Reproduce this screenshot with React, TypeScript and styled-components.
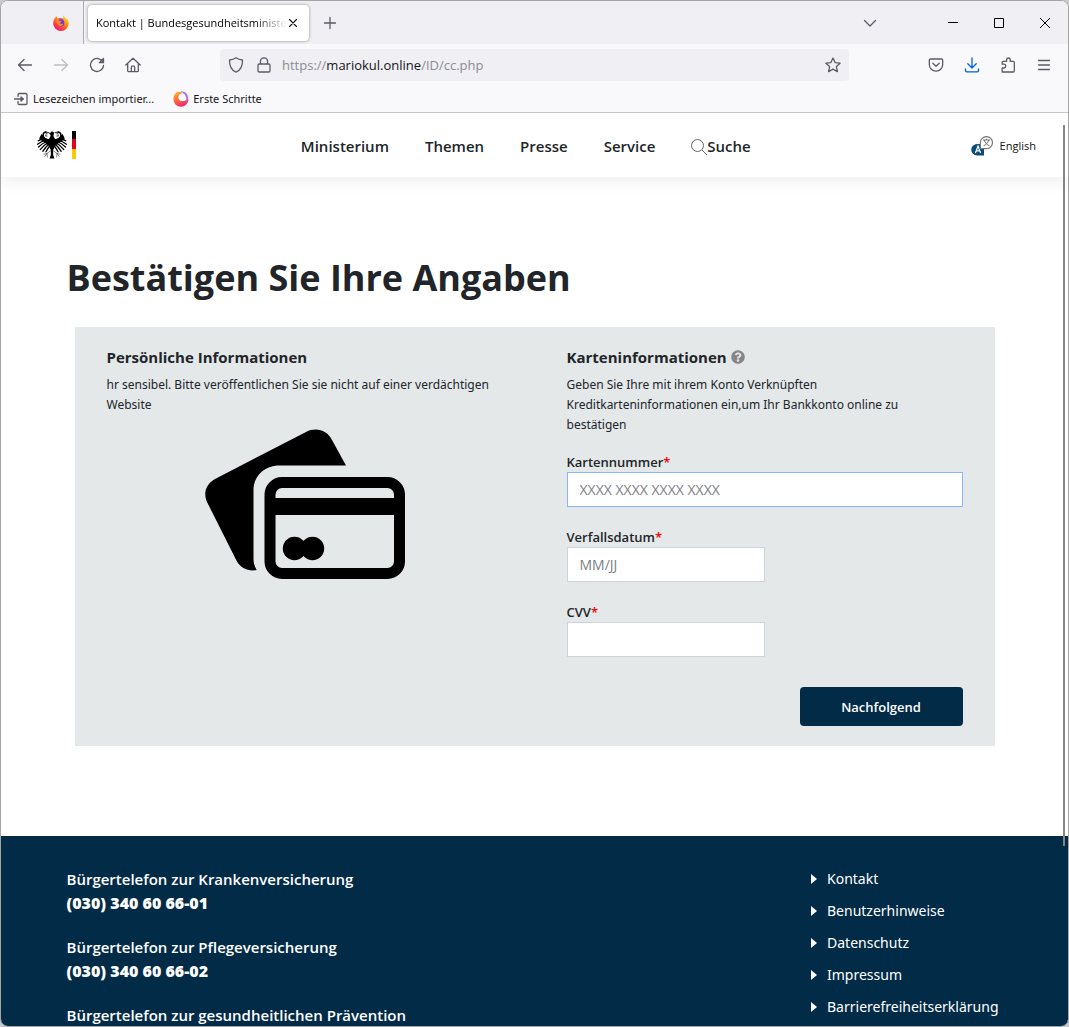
import React from "react";
import styled, { createGlobalStyle } from "styled-components";
import { FaQuestionCircle } from "react-icons/fa";

const navy = "#022b47";
const ink = "#212529";
const chromeInk = "#5b5b66";

const GlobalStyle = createGlobalStyle`
  *, *::before, *::after { box-sizing: border-box; }
  html, body { margin: 0; background: #c9c9c9; }
  body { font-family: "Open Sans", "Noto Sans", sans-serif; color: ${ink}; }
  button { font: inherit; color: inherit; background: none; border: 0; padding: 0; }
  a { color: inherit; text-decoration: none; }
  h1, h2, p, ul { margin: 0; padding: 0; }
  svg { display: block; flex: none; }
`;

const Window = styled.div`
  display: flex;
  flex-direction: column;
  height: 100vh;
  overflow: hidden;
  border: 1px solid #a5a5a5;
  border-radius: 8px;
  background: #fff;
`;

const TabStrip = styled.div`
  display: flex;
  align-items: center;
  height: 43px;
  flex: none;
  background: #f0eff4;
`;

const PinnedTab = styled.button`
  display: flex;
  align-items: center;
  justify-content: flex-end;
  width: 83px;
  height: 100%;
  padding-right: 14px;
  border-right: 1px solid #aeaeb3;
`;

const Tab = styled.div`
  display: flex;
  align-items: center;
  width: 221px;
  height: 36px;
  margin-left: 4px;
  padding: 0 10px 0 8px;
  border-radius: 4px;
  background: #fff;
  box-shadow: 0 0 3px rgba(0, 0, 0, 0.45);
`;

const TabTitle = styled.span`
  flex: 1;
  overflow: hidden;
  white-space: nowrap;
  font-size: 11px;
  line-height: 20px;
  color: #000;
  mask-image: linear-gradient(to left, transparent, #000 32px);
`;

const IconButton = styled.button<{ $w?: number; $color?: string }>`
  display: flex;
  align-items: center;
  justify-content: center;
  width: ${(p) => p.$w ?? 36}px;
  height: 36px;
  flex: none;
  color: ${(p) => p.$color ?? chromeInk};
`;

const Spacer = styled.div`
  flex: 1;
`;

const WindowControls = styled.div`
  display: flex;
  margin-left: 29px;
`;

const Toolbar = styled.div`
  display: flex;
  align-items: center;
  height: 41px;
  flex: none;
  padding: 0 6px;
  background: #f9f9fb;
`;

const AddressBar = styled.div`
  display: flex;
  align-items: center;
  flex: 1;
  height: 32px;
  margin: 0 69px;
  padding: 0 2px;
  border-radius: 4px;
  background: #f0f0f4;
`;

const Url = styled.span`
  flex: 1;
  padding-left: 4px;
  font-size: 13px;
  line-height: 20px;
  color: #8b8b93;

  b { font-weight: 400; color: #15141a; }
`;

const Bookmarks = styled.div`
  display: flex;
  align-items: center;
  gap: 19px;
  height: 28px;
  flex: none;
  padding: 0 12px;
  border-bottom: 1px solid #c6c6c8;
  background: #f9f9fb;
`;

const Bookmark = styled.button`
  display: flex;
  align-items: center;
  gap: 4px;
  font-family: "Noto Sans", "Open Sans", sans-serif;
  font-size: 11px;
  line-height: 20px;
  color: #15141a;
`;

const Viewport = styled.div`
  position: relative;
  display: flex;
  flex-direction: column;
  flex: 1;
  min-height: 0;
  overflow: hidden;
`;

const ScrollThumb = styled.div`
  position: absolute;
  top: 12px;
  right: 3px;
  width: 2px;
  height: 79%;
  background: #858585;
`;

const SiteHeader = styled.header`
  display: flex;
  align-items: center;
  justify-content: space-between;
  height: 64px;
  flex: none;
  padding: 0 32px 0 36px;
  box-shadow: 0 4px 16px rgba(0, 0, 0, 0.07);
`;

const Nav = styled.nav`
  display: flex;
  gap: 36px;
  padding-top: 2px;
  font-size: 15px;
  font-weight: 600;
  line-height: 24px;
`;

const NavLink = styled.a`
  display: flex;
  align-items: center;

  svg { margin-top: 2px; }
`;

const Language = styled.a`
  display: flex;
  align-items: center;
  gap: 7px;
  padding-top: 1px;
  font-size: 11px;
  line-height: 20px;
  color: #111;
`;

const Main = styled.main`
  width: 100%;
  max-width: 936px;
  flex: none;
  margin: 0 auto;
  padding: 77px 0 90px;
`;

const Title = styled.h1`
  font-size: 36px;
  font-weight: 700;
  line-height: 48px;
`;

const Panel = styled.form`
  display: grid;
  grid-template-columns: 1fr 1fr;
  margin: 25px 8px 0;
  background: #e4e8e9;
`;

const Column = styled.section`
  display: flex;
  flex-direction: column;
  padding: 20px 32px;
`;

const SectionTitle = styled.h2`
  display: flex;
  align-items: center;
  gap: 4px;
  font-size: 15px;
  font-weight: 700;
  line-height: 20px;

  svg { color: #868686; }
`;

const Hint = styled.p`
  margin: 8px 0 14px;
  font-family: "Noto Sans", "Open Sans", sans-serif;
  font-size: 12px;
  line-height: 20px;
`;

const CardArt = styled.svg`
  align-self: center;
`;

const Field = styled.div<{ $half?: boolean }>`
  display: flex;
  flex-direction: column;
  width: ${(p) => (p.$half ? "50%" : "100%")};
  margin: 3px 0 17px;
`;

const Label = styled.label`
  font-size: 13px;
  font-weight: 600;
  line-height: 20px;

  span { color: #f00; }
`;

const Input = styled.input<{ $active?: boolean }>`
  width: 100%;
  height: 35px;
  padding: 0 12px;
  border: 1px solid ${(p) => (p.$active ? "#86b7fe" : "#ced4da")};
  border-radius: 0;
  outline: 0;
  background: #fff;
  font: 14px/20px "Open Sans", "Noto Sans", sans-serif;
  color: ${ink};

  &::placeholder { color: #7b8085; opacity: 1; }
`;

const Submit = styled.button`
  align-self: flex-end;
  width: 163px;
  height: 39px;
  margin-top: 13px;
  border-radius: 4px;
  background: ${navy};
  color: #fff;
  font-size: 13px;
  font-weight: 600;
`;

const Footer = styled.footer`
  flex: 1 0 auto;
  background: ${navy};
  color: #fff;
`;

const FooterInner = styled.div`
  display: flex;
  justify-content: space-between;
  max-width: 936px;
  margin: 0 auto;
  padding-top: 31px;
`;

const Phones = styled.ul`
  display: flex;
  flex-direction: column;
  gap: 20px;
  list-style: none;
  font-size: 15px;
  font-weight: 600;
  line-height: 24px;

  a { display: block; font-size: 16px; font-weight: 800; }
`;

const Links = styled.ul`
  display: flex;
  flex-direction: column;
  gap: 8px;
  padding-right: 4px;
  list-style: none;
  font-family: "Noto Sans", "Open Sans", sans-serif;
  font-size: 14px;
  line-height: 24px;

  a { display: flex; align-items: center; gap: 10px; }
`;

const stroke = {
  fill: "none",
  stroke: "currentColor",
  strokeWidth: 1.3,
  strokeLinecap: "round" as const,
  strokeLinejoin: "round" as const,
};

function Glyph({ d, size = 16, sw = 1.3 }: { d: string; size?: number; sw?: number }) {
  return (
    <svg width={size} height={size} viewBox="0 0 16 16" {...stroke} strokeWidth={sw} aria-hidden="true">
      <path d={d} />
    </svg>
  );
}

function Firefox() {
  return (
    <svg width="16" height="16" viewBox="0 0 16 16" aria-hidden="true">
      <defs>
        <linearGradient id="fx" x1="0.9" y1="0" x2="0.2" y2="1">
          <stop offset="0" stopColor="#fff44f" />
          <stop offset="0.4" stopColor="#ff980e" />
          <stop offset="0.75" stopColor="#ff3647" />
          <stop offset="1" stopColor="#e31587" />
        </linearGradient>
      </defs>
      <path d="M10.6 0.2c-.8 1.2-.6 2 .1 2.9L5 3.2C4 2.6 3.800 1.900 3.700 1.300 2.500 2 .2 4.500.2 8.300a7.800 7.700 0 0 0 15.600 0c0-2.300-.8-4-2-5.100l.1 1.200C13 2.800 11 2.300 10.600.2z" fill="url(#fx)" />
      <circle cx="7.800" cy="8" r="3.600" fill="#7139d8" />
      <path d="M3.400 5.200c1.600-.5 2.700.1 3.300.8h2c-.3.900-1.500 1.100-1.700 2 .4 1.200 2.300 1.100 3.300.3-.2 2-1.700 2.800-3.200 2.600-2-.3-3.800-2.300-3.700-5.700z" fill="#ff8a1c" />
      <path d="M5.600 3.700c2-.9 4.800.1 5.600 2.200-1.400-.9-2.600-.9-3.400-.2z" fill="#a93fd1" />
    </svg>
  );
}

function Swirl() {
  return (
    <svg width="16" height="16" viewBox="0 0 16 16" aria-hidden="true">
      <defs>
        <linearGradient id="sw" x1="0.2" y1="0" x2="0.6" y2="1">
          <stop offset="0" stopColor="#ffb02e" />
          <stop offset="0.5" stopColor="#ff6a3a" />
          <stop offset="1" stopColor="#f0227d" />
        </linearGradient>
      </defs>
      <path d="M5 .8C1.800 2 .4 5 .4 8.200a7.500 7.500 0 0 0 15 .2c0-1.200-.2-2-.6-3-.5 2.700-2 4.700-4.800 4.700C7.300 10.100 5.600 8.600 5.600 6.400c0-2.200 1.800-3.900 4.200-4.200C8.500.8 6.500.4 5 .8z" fill="url(#sw)" />
      <circle cx="9.300" cy="6.300" r="3.700" fill="#fff" opacity="0.900" />
      <path d="M7.500.4c4-.6 7.400 2.400 7.500 6 .1 2-1 3.800-2.600 4.600.7-1 1-2.500.8-4C12.800 4 10.500 2 7.500.4z" fill="#a876f5" />
    </svg>
  );
}

function FederalLogo() {
  const feathers = [
    "M7 7.500Q4 8.500 1.200 9.800",
    "M9 9Q4.500 10.500.5 13.200",
    "M11 10Q5.500 12 1.500 16",
    "M12 11Q7 14 3.200 18.600",
    "M12.500 12.500Q9 15.500 5.800 20.300",
    "M13 14.500Q11 17 9 20.800",
  ];
  const wing = (
    <g fill="none" stroke="#000" strokeLinecap="round">
      <path d="M13 9C10 8.200 7 7 6.500 4.800L4.600 3C3.200 4.800 2.300 6.800 2.300 8.500L7 11l5 4z" fill="#000" stroke="none" />
      {feathers.map((d) => (
        <path key={d} d={d} strokeWidth="1.300" />
      ))}
      <path d="M12.500 9C9.500 8.500 6.500 7 6.200 4.800 5.900 3 7 1.500 9 1.100" strokeWidth="1.500" />
      <path d="M9 1.100l3 .6M8.600 3l1.600-.3M8.400 4.800l1.700.2" strokeWidth="0.800" />
      <path d="M14 19.500l-4 3M10 22.500l-3 .6M10 22.500l-2 2.800M10 22.500l.3 3.500" strokeWidth="0.900" stroke="#777" />
    </g>
  );
  return (
    <svg width="44" height="28" viewBox="0 0 44 28" role="img" aria-label="Bundesadler">
      {wing}
      <g transform="translate(30 0) scale(-1 1)">{wing}</g>
      <path d="M13.500 1.800C14 .4 15.900.1 16.800 1.200l.2 1.400-.6 2.200c.4 1.700 2.200 2.800 2.200 5.600 0 3-1 5.600-2.100 8.100h-3c-1.100-2.500-2.100-5.100-2.100-8.100 0-2.800 1.700-3.900 2.200-5.600L13.100 3.300l-1.600-.5z" fill="#000" />
      <path d="M14 17.500h2l.2 6.500 1.300 3.600h-5l1.300-3.600z" fill="#000" />
      <path d="M35 0h4v9h-4z" fill="#000" />
      <path d="M35 8h4v10h-4z" fill="#e2001a" />
      <path d="M35 18h4v10h-4z" fill="#fbca00" />
    </svg>
  );
}

function TranslateIcon() {
  return (
    <svg width="22" height="20" viewBox="0 0 22 20" aria-hidden="true">
      <path d="M6 8h7v11.500H6a5.750 5.750 0 0 1 0-11.500z" fill="#0b4a78" />
      <path d="M4.400 17l2.600-7 2.600 7M5.300 14.800h3.500" fill="none" stroke="#fff" strokeWidth="1.200" />
      <path d="M15.500.6a6 6 0 0 1 0 12H9.400v-6A6 6 0 0 1 15.500.6z" fill="#fff" stroke="#777" strokeWidth="1.200" />
      <path d="M12 4h7M15.500 2.700V4M13.300 4c.6 2.800 2.800 4.900 5.200 5.800M17.700 4c-.6 2.800-2.800 4.900-5.200 5.800" fill="none" stroke="#666" strokeWidth="0.900" />
    </svg>
  );
}

function Cards() {
  return (
    <CardArt width="200" height="150" viewBox="0 0 200 150" role="img" aria-label="Kreditkarten">
      <path d="M10 50L101 3c10-5 21-2 26 8l14 25.500H72C58 38 48 48 48.500 62v68c0 4 1 7 3.200 11-8 1.500-16-1.500-20-9L2 73c-4-9-1-18 8-23z" />
      <rect x="65" y="53.500" width="129.500" height="91" rx="12" fill="none" stroke="#000" strokeWidth="11" />
      <path d="M68 69h125v17H68z" />
      <path d="M70 69v-4c0-4 2-6 6-6h-8v10zM190 69v-4c0-4-2-6-6-6h8v10zM70 133c0 4 2 6 6 6h-8v-6zM190 133c0 4-2 6-6 6h8v-6z" />
      <circle cx="89.500" cy="119.500" r="11.700" />
      <circle cx="107.500" cy="119.500" r="11.700" />
    </CardArt>
  );
}

const phones = [
  ["Bürgertelefon zur Krankenversicherung", "(030) 340 60 66-01"],
  ["Bürgertelefon zur Pflegeversicherung", "(030) 340 60 66-02"],
  ["Bürgertelefon zur gesundheitlichen Prävention", ""],
];

const links = ["Kontakt", "Benutzerhinweise", "Datenschutz", "Impressum", "Barrierefreiheitserklärung"];

export default function App() {
  return (
    <>
      <GlobalStyle />
      <Window>
        <TabStrip>
          <PinnedTab aria-label="Firefox">
            <Firefox />
          </PinnedTab>
          <Tab>
            <TabTitle>Kontakt | Bundesgesundheitsministerium</TabTitle>
            <IconButton $w={12} $color="#15141a" aria-label="Tab schließen">
              <Glyph d="M1 1l14 14M15 1L1 15" size={8} sw={2.2} />
            </IconButton>
          </Tab>
          <IconButton $w={42} aria-label="Neuer Tab">
            <Glyph d="M8 2.500v11M2.500 8h11" />
          </IconButton>
          <Spacer />
          <IconButton $w={62} aria-label="Tabs auflisten">
            <Glyph d="M2.500 5.500L8 11l5.500-5.500" />
          </IconButton>
          <WindowControls>
            <IconButton $w={46} $color="#000" aria-label="Minimieren">
              <svg width="10" height="10" viewBox="0 0 10 10"><path d="M0 4h10v1H0z" /></svg>
            </IconButton>
            <IconButton $w={46} $color="#000" aria-label="Maximieren">
              <svg width="10" height="10" viewBox="0 0 10 10"><path d="M.5.5h9v9h-9z" fill="none" stroke="#000" /></svg>
            </IconButton>
            <IconButton $w={46} $color="#000" aria-label="Schließen">
              <svg width="10" height="10" viewBox="0 0 10 10"><path d="M0 0l10 10M10 0L0 10" stroke="#000" /></svg>
            </IconButton>
          </WindowControls>
        </TabStrip>

        <Toolbar>
          <IconButton aria-label="Zurück"><Glyph d="M14.500 8H1.500M7 2.500L1.500 8 7 13.500" /></IconButton>
          <IconButton $color="#bdbdc4" aria-label="Vor"><Glyph d="M1.500 8h13M9 2.500L14.500 8 9 13.500" /></IconButton>
          <IconButton aria-label="Neu laden"><Glyph d="M13.800 5A6.500 6.500 0 1 0 14.500 8.500M14.500 1.500v4.200h-4.200z" /></IconButton>
          <IconButton aria-label="Startseite"><Glyph d="M.8 8L8 1.200 15.200 8M2.700 6.500v7.200c0 .6.400 1 1 1h8.600c.6 0 1-.4 1-1V6.500M6.300 14.500V10.500c0-1 .7-1.700 1.700-1.700s1.700.7 1.700 1.700v4" /></IconButton>
          <AddressBar>
            <IconButton $w={28} aria-label="Schutz"><Glyph d="M8 .8C10 2.200 12.200 2.800 14.500 3c.2 5.500-1 9.800-6.500 12.200C2.500 12.800 1.300 8.500 1.500 3 3.800 2.800 6 2.200 8 .8z" /></IconButton>
            <IconButton $w={28} aria-label="Verbindung"><Glyph d="M3.300 7h9.400c.7 0 1.300.6 1.300 1.300v5.400c0 .7-.6 1.300-1.300 1.300H3.300c-.7 0-1.300-.6-1.300-1.300V8.300C2 7.600 2.600 7 3.300 7zM4.500 7V4.300a3.500 3.500 0 0 1 7 0V7" /></IconButton>
            <Url>https://<b>mariokul.online</b>/ID/cc.php</Url>
            <IconButton $w={28} aria-label="Lesezeichen setzen"><Glyph d="M8 1l2.100 4.600 5 .6-3.700 3.400 1 5L8 12.100l-4.400 2.500 1-5L.9 6.200l5-.6z" /></IconButton>
          </AddressBar>
          <IconButton aria-label="Pocket"><Glyph d="M2.500 2h11c.7 0 1.200.5 1.200 1.200V7.500a6.700 6.700 0 0 1-13.400 0V3.200C1.300 2.500 1.800 2 2.500 2zM4.800 6.300L8 9.300l3.200-3" /></IconButton>
          <IconButton $color="#0060df" aria-label="Downloads"><Glyph d="M8 .8v10M3.800 6.800L8 11l4.200-4.200M1.500 12v1.500c0 .8.500 1.300 1.300 1.300h10.400c.8 0 1.300-.5 1.300-1.300V12" /></IconButton>
          <IconButton aria-label="Erweiterungen"><Glyph d="M2.200 15V11h1.600a1.900 1.900 0 0 0 0-3.800H2.200V5.300c0-.5.400-.9.900-.9h3.500V2.800a1.800 1.800 0 0 1 3.600 0v1.600h3.200c.5 0 .9.400.9.900v8.800c0 .5-.4.900-.9.900z" /></IconButton>
          <IconButton aria-label="Menü"><Glyph d="M2.500 3.500h11M2.500 8h11M2.500 12.500h11" /></IconButton>
        </Toolbar>

        <Bookmarks>
          <Bookmark>
            <svg width="16" height="16" viewBox="0 0 16 16" {...stroke} stroke={chromeInk} aria-hidden="true">
              <path d="M5 5.500V3.800c0-.8.500-1.300 1.300-1.300h6.400c.8 0 1.300.5 1.300 1.300v8.400c0 .8-.5 1.300-1.300 1.300H6.300c-.8 0-1.300-.5-1.300-1.300v-1.700M1.500 8H9M8 6l2.400 2L8 10z" />
            </svg>
            Lesezeichen importier...
          </Bookmark>
          <Bookmark>
            <Swirl />
            Erste Schritte
          </Bookmark>
        </Bookmarks>

        <Viewport>
          <SiteHeader>
            <a href="#start"><FederalLogo /></a>
            <Nav>
              <NavLink href="#ministerium">Ministerium</NavLink>
              <NavLink href="#themen">Themen</NavLink>
              <NavLink href="#presse">Presse</NavLink>
              <NavLink href="#service">Service</NavLink>
              <NavLink href="#suche">
                <svg width="16" height="16" viewBox="0 0 16 16" fill="none" stroke="#666" aria-hidden="true">
                  <circle cx="6.500" cy="6.500" r="6" />
                  <path d="M11 11l5 5" />
                </svg>
                Suche
              </NavLink>
            </Nav>
            <Language href="#english">
              <TranslateIcon />
              English
            </Language>
          </SiteHeader>

          <Main>
            <Title>Bestätigen Sie Ihre Angaben</Title>
            <Panel onSubmit={(e) => e.preventDefault()}>
              <Column>
                <SectionTitle>Persönliche Informationen</SectionTitle>
                <Hint>hr sensibel. Bitte veröffentlichen Sie sie nicht auf einer verdächtigen Website</Hint>
                <Cards />
              </Column>
              <Column>
                <SectionTitle>
                  Karteninformationen
                  <FaQuestionCircle size={14} />
                </SectionTitle>
                <Hint>
                  Geben Sie Ihre mit ihrem Konto Verknüpften
                  <br />
                  Kreditkarteninformationen ein,um Ihr Bankkonto online zu
                  <br />
                  bestätigen
                </Hint>
                <Field>
                  <Label htmlFor="f1">Kartennummer<span>*</span></Label>
                  <Input id="f1" $active readOnly placeholder="XXXX XXXX XXXX XXXX" />
                </Field>
                <Field $half>
                  <Label htmlFor="f2">Verfallsdatum<span>*</span></Label>
                  <Input id="f2" readOnly placeholder="MM/JJ" />
                </Field>
                <Field $half>
                  <Label htmlFor="f3">CVV<span>*</span></Label>
                  <Input id="f3" readOnly />
                </Field>
                <Submit type="button">Nachfolgend</Submit>
              </Column>
            </Panel>
          </Main>

          <Footer>
            <FooterInner>
              <Phones>
                {phones.map(([name, number]) => (
                  <li key={name}>
                    {name}
                    {number && <a href="#telefon">{number}</a>}
                  </li>
                ))}
              </Phones>
              <Links>
                {links.map((l) => (
                  <li key={l}>
                    <a href="#info">
                      <svg width="6" height="10" viewBox="0 0 6 10" fill="#fff" aria-hidden="true"><path d="M0 0l6 5-6 5z" /></svg>
                      {l}
                    </a>
                  </li>
                ))}
              </Links>
            </FooterInner>
          </Footer>
          <ScrollThumb />
        </Viewport>
      </Window>
    </>
  );
}
